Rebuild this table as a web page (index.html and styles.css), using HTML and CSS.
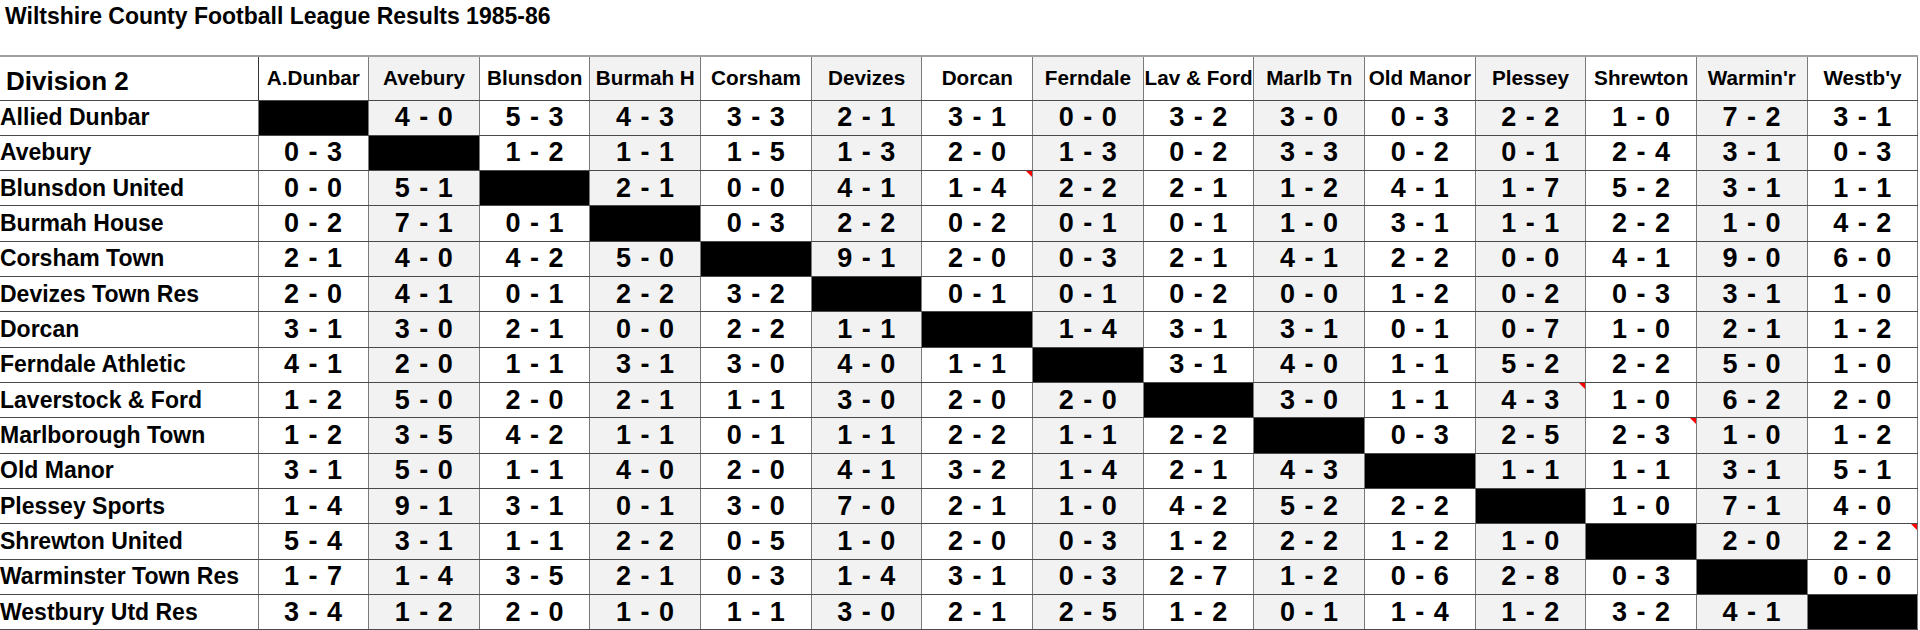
FILE: index.html
```html
<!DOCTYPE html>
<html lang="en">
<head>
<meta charset="utf-8">
<title>Wiltshire County Football League Results 1985-86</title>
<link rel="stylesheet" href="styles.css">
</head>
<body>
<h1 class="title">Wiltshire County Football League Results 1985-86</h1>
<table class="grid">
<colgroup><col class="c-team"><col span="15" class="c-res"></colgroup>
<thead>
<tr class="head">
<th class="div">Division 2</th><th>A.Dunbar</th><th>Avebury</th><th>Blunsdon</th><th>Burmah H</th><th>Corsham</th><th>Devizes</th><th>Dorcan</th><th>Ferndale</th><th>Lav &amp; Ford</th><th>Marlb Tn</th><th>Old Manor</th><th>Plessey</th><th>Shrewton</th><th>Warmin'r</th><th>Westb'y</th>
</tr>
</thead>
<tbody>
<tr><th>Allied Dunbar</th><td class="x"></td><td>4 - 0</td><td>5 - 3</td><td>4 - 3</td><td>3 - 3</td><td>2 - 1</td><td>3 - 1</td><td>0 - 0</td><td>3 - 2</td><td>3 - 0</td><td>0 - 3</td><td>2 - 2</td><td>1 - 0</td><td>7 - 2</td><td>3 - 1</td></tr>
<tr><th>Avebury</th><td>0 - 3</td><td class="x"></td><td>1 - 2</td><td>1 - 1</td><td>1 - 5</td><td>1 - 3</td><td>2 - 0</td><td>1 - 3</td><td>0 - 2</td><td>3 - 3</td><td>0 - 2</td><td>0 - 1</td><td>2 - 4</td><td>3 - 1</td><td>0 - 3</td></tr>
<tr><th>Blunsdon United</th><td>0 - 0</td><td>5 - 1</td><td class="x"></td><td>2 - 1</td><td>0 - 0</td><td>4 - 1</td><td class="note">1 - 4</td><td>2 - 2</td><td>2 - 1</td><td>1 - 2</td><td>4 - 1</td><td>1 - 7</td><td>5 - 2</td><td>3 - 1</td><td>1 - 1</td></tr>
<tr><th>Burmah House</th><td>0 - 2</td><td>7 - 1</td><td>0 - 1</td><td class="x"></td><td>0 - 3</td><td>2 - 2</td><td>0 - 2</td><td>0 - 1</td><td>0 - 1</td><td>1 - 0</td><td>3 - 1</td><td>1 - 1</td><td>2 - 2</td><td>1 - 0</td><td>4 - 2</td></tr>
<tr><th>Corsham Town</th><td>2 - 1</td><td>4 - 0</td><td>4 - 2</td><td>5 - 0</td><td class="x"></td><td>9 - 1</td><td>2 - 0</td><td>0 - 3</td><td>2 - 1</td><td>4 - 1</td><td>2 - 2</td><td>0 - 0</td><td>4 - 1</td><td>9 - 0</td><td>6 - 0</td></tr>
<tr><th>Devizes Town Res</th><td>2 - 0</td><td>4 - 1</td><td>0 - 1</td><td>2 - 2</td><td>3 - 2</td><td class="x"></td><td>0 - 1</td><td>0 - 1</td><td>0 - 2</td><td>0 - 0</td><td>1 - 2</td><td>0 - 2</td><td>0 - 3</td><td>3 - 1</td><td>1 - 0</td></tr>
<tr><th>Dorcan</th><td>3 - 1</td><td>3 - 0</td><td>2 - 1</td><td>0 - 0</td><td>2 - 2</td><td>1 - 1</td><td class="x"></td><td>1 - 4</td><td>3 - 1</td><td>3 - 1</td><td>0 - 1</td><td>0 - 7</td><td>1 - 0</td><td>2 - 1</td><td>1 - 2</td></tr>
<tr><th>Ferndale Athletic</th><td>4 - 1</td><td>2 - 0</td><td>1 - 1</td><td>3 - 1</td><td>3 - 0</td><td>4 - 0</td><td>1 - 1</td><td class="x"></td><td>3 - 1</td><td>4 - 0</td><td>1 - 1</td><td>5 - 2</td><td>2 - 2</td><td>5 - 0</td><td>1 - 0</td></tr>
<tr><th>Laverstock &amp; Ford</th><td>1 - 2</td><td>5 - 0</td><td>2 - 0</td><td>2 - 1</td><td>1 - 1</td><td>3 - 0</td><td>2 - 0</td><td>2 - 0</td><td class="x"></td><td>3 - 0</td><td>1 - 1</td><td class="note">4 - 3</td><td>1 - 0</td><td>6 - 2</td><td>2 - 0</td></tr>
<tr><th>Marlborough Town</th><td>1 - 2</td><td>3 - 5</td><td>4 - 2</td><td>1 - 1</td><td>0 - 1</td><td>1 - 1</td><td>2 - 2</td><td>1 - 1</td><td>2 - 2</td><td class="x"></td><td>0 - 3</td><td>2 - 5</td><td class="note">2 - 3</td><td>1 - 0</td><td>1 - 2</td></tr>
<tr><th>Old Manor</th><td>3 - 1</td><td>5 - 0</td><td>1 - 1</td><td>4 - 0</td><td>2 - 0</td><td>4 - 1</td><td>3 - 2</td><td>1 - 4</td><td>2 - 1</td><td>4 - 3</td><td class="x"></td><td>1 - 1</td><td>1 - 1</td><td>3 - 1</td><td>5 - 1</td></tr>
<tr><th>Plessey Sports</th><td>1 - 4</td><td>9 - 1</td><td>3 - 1</td><td>0 - 1</td><td>3 - 0</td><td>7 - 0</td><td>2 - 1</td><td>1 - 0</td><td>4 - 2</td><td>5 - 2</td><td>2 - 2</td><td class="x"></td><td>1 - 0</td><td>7 - 1</td><td>4 - 0</td></tr>
<tr><th>Shrewton United</th><td>5 - 4</td><td>3 - 1</td><td>1 - 1</td><td>2 - 2</td><td>0 - 5</td><td>1 - 0</td><td>2 - 0</td><td>0 - 3</td><td>1 - 2</td><td>2 - 2</td><td>1 - 2</td><td>1 - 0</td><td class="x"></td><td>2 - 0</td><td class="note">2 - 2</td></tr>
<tr><th>Warminster Town Res</th><td>1 - 7</td><td>1 - 4</td><td>3 - 5</td><td>2 - 1</td><td>0 - 3</td><td>1 - 4</td><td>3 - 1</td><td>0 - 3</td><td>2 - 7</td><td>1 - 2</td><td>0 - 6</td><td>2 - 8</td><td>0 - 3</td><td class="x"></td><td>0 - 0</td></tr>
<tr><th>Westbury Utd Res</th><td>3 - 4</td><td>1 - 2</td><td>2 - 0</td><td>1 - 0</td><td>1 - 1</td><td>3 - 0</td><td>2 - 1</td><td>2 - 5</td><td>1 - 2</td><td>0 - 1</td><td>1 - 4</td><td>1 - 2</td><td>3 - 2</td><td>4 - 1</td><td class="x"></td></tr>
</tbody>
</table>
</body>
</html>
```
FILE: styles.css
```css
html, body {
  margin: 0;
  padding: 0;
  background: #ffffff;
  font-family: "Liberation Sans", Arial, sans-serif;
  color: #000;
}
.title {
  margin: 0;
  padding: 4px 0 0 5px;
  height: 55px;
  box-sizing: border-box;
  font-size: 23px;
  font-weight: bold;
  line-height: 24px;
}
.grid {
  border-collapse: collapse;
  table-layout: fixed;
  width: 1918px;
  border-top: 2px solid #a0a0a0;
}
.c-team { width: 258px; }
.c-res { width: 110.67px; }
.grid th, .grid td {
  padding: 0;
  font-weight: bold;
  border-right: 1px solid #7a7a7a;
  border-bottom: 1px solid #4a4a4a;
  white-space: nowrap;
  line-height: 1;
}
.grid tr.head { height: 44px; }
.grid tbody tr { height: 35.33px; }
.head th {
  font-size: 20.7px;
  text-align: center;
  vertical-align: middle;
  padding-top: 1px;
}
.head th.div {
  text-align: left;
  vertical-align: bottom;
  font-size: 26px;
  padding: 0 0 6px 6px;
  border-right-color: #333;
}
tbody th {
  text-align: left;
  font-size: 23px;
  padding: 3px 0 0 6px;
  vertical-align: middle;
  border-right-color: #333;
}
tbody td {
  text-align: center;
  font-size: 27px;
  letter-spacing: 0.5px;
  word-spacing: 1px;
  vertical-align: middle;
  position: relative;
}
.head th:nth-child(2n+3),
tbody td:nth-child(2n+3) {
  background: #f2f2f2;
}
tbody td.x { background: #000; }
td.note::after {
  content: "";
  position: absolute;
  top: 0;
  right: 0;
  width: 0;
  height: 0;
  border-top: 6px solid #ff0000;
  border-left: 6px solid transparent;
}
```
